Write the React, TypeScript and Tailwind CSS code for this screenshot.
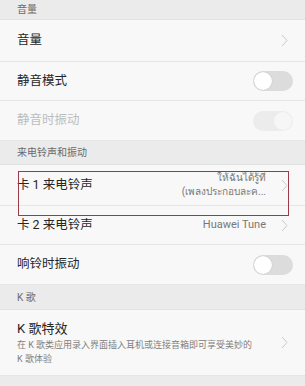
import React from 'react';

const font = { fontFamily: 'Roboto, "Noto Sans CJK SC", "Noto Sans", sans-serif' };

function Section({ title, className = '' }: { title: string; className?: string }) {
  return (
    <div className={`flex items-center bg-[#ebebeb] px-[17px] border-b border-[#e2e2e2] ${className}`}>
      <span className="text-[10px] text-[#6a6a6a]">{title}</span>
    </div>
  );
}

function Chevron() {
  return (
    <svg width="7" height="13" viewBox="0 0 7 13" className="shrink-0">
      <path d="M1 1 L6 6.5 L1 12" fill="none" stroke="#c9c9c9" strokeWidth="1" />
    </svg>
  );
}

function Toggle({ disabled = false }: { disabled?: boolean }) {
  if (disabled) {
    return (
      <div className="w-[40px] h-[20px] rounded-full bg-[#ececec] flex items-center justify-end px-[1px]">
        <div className="w-[18px] h-[18px] rounded-full bg-[#f6f6f6]" />
      </div>
    );
  }
  return (
    <div className="w-[40px] h-[20px] rounded-full bg-[#dcdcdc] flex items-center px-[1px]">
      <div className="w-[18px] h-[18px] rounded-full bg-white shadow-[0_0_1px_rgba(0,0,0,0.25)]" />
    </div>
  );
}

function Row({
  label,
  right,
  className = 'h-[40px]',
  labelClass = 'text-[#262626]',
  children,
}: {
  label: string;
  right?: React.ReactNode;
  className?: string;
  labelClass?: string;
  children?: React.ReactNode;
}) {
  return (
    <div className={`relative flex items-center justify-between pl-[17px] pr-[12px] bg-[#f8f8f8] border-b border-[#e6e6e6] ${className}`}>
      <span className={`text-[12.5px] ${labelClass}`}>{label}</span>
      {right}
      {children}
    </div>
  );
}

function Chev() {
  return (
    <div className="pr-[5px]">
      <Chevron />
    </div>
  );
}

export default function App() {
  return (
    <div className="w-[305px] h-[386px] overflow-hidden bg-[#f8f8f8] flex flex-col" style={font}>
      <Section title="音量" className="h-[20px] shrink-0" />
      <Row label="音量" className="h-[42px] shrink-0" right={<Chev />} />
      <Row label="静音模式" className="h-[39px] shrink-0" right={<Toggle />} />
      <Row label="静音时振动" className="h-[40px] shrink-0" labelClass="text-[#bdbdbd]" right={<Toggle disabled />} />
      <Section title="来电铃声和振动" className="h-[24px] shrink-0" />
      <Row
        label="卡 1 来电铃声"
        className="h-[41px] shrink-0"
        right={
          <div className="flex items-center gap-[15px]">
            <div className="flex flex-col items-end text-[10px] leading-[14px] text-[#777]">
              <span>ให้ฉันได้รู้ที</span>
              <span>(เพลงประกอบละค...</span>
            </div>
            <Chev />
          </div>
        }
      >
        <div className="absolute left-[18px] top-[6px] w-[271px] h-[45px] border border-[#9c3a4a] z-10 pointer-events-none" />
      </Row>
      <Row
        label="卡 2 来电铃声"
        className="h-[39px] shrink-0"
        right={
          <div className="flex items-center gap-[15px]">
            <span className="text-[11px] text-[#777]">Huawei Tune</span>
            <Chev />
          </div>
        }
      />
      <Row label="响铃时振动" className="h-[40px] shrink-0" right={<Toggle />} />
      <Section title="K 歌" className="h-[25px] shrink-0" />
      <div className="flex items-center justify-between pl-[17px] pr-[12px] bg-[#f8f8f8] h-[66px] shrink-0 border-b border-[#e6e6e6]">
        <div className="flex flex-col">
          <span className="text-[13px] leading-[18px] text-[#262626]">K 歌特效</span>
          <span className="text-[9px] leading-[14px] text-[#808080] whitespace-nowrap">
            在 K 歌类应用录入界面插入耳机或连接音箱即可享受美妙的
          </span>
          <span className="text-[9px] leading-[14px] text-[#808080]">K 歌体验</span>
        </div>
        <Chev />
      </div>
      <div className="bg-[#ebebeb] flex-1" />
    </div>
  );
}
